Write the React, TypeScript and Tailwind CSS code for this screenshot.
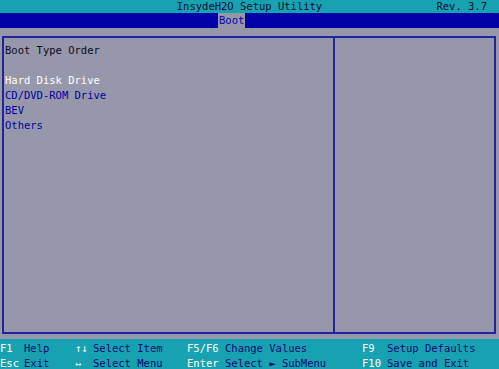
const FONT = "font-['DejaVu_Sans_Mono','Liberation_Mono',monospace]";

const FOOTER: { key: string; label: string; x: string }[][] = [
  [
    { key: "F1", label: "Help", x: "w-[75px]" },
    { key: "↑↓", label: "Select Item", x: "w-[112px]" },
    { key: "F5/F6", label: "Change Values", x: "w-[175px]" },
    { key: "F9", label: "Setup Defaults", x: "" },
  ],
  [
    { key: "Esc", label: "Exit", x: "w-[75px]" },
    { key: "↔", label: "Select Menu", x: "w-[112px]" },
    { key: "Enter", label: "Select ► SubMenu", x: "w-[175px]" },
    { key: "F10", label: "Save and Exit", x: "" },
  ],
];

const KEY_W: Record<string, string> = {
  F1: "w-[24px]",
  Esc: "w-[24px]",
  "↑↓": "w-[18px]",
  "↔": "w-[18px]",
  "F5/F6": "w-[38px]",
  Enter: "w-[38px]",
  F9: "w-[25px]",
  F10: "w-[25px]",
};

export default function App() {
  return (
    <div
      className={`flex h-[369px] w-[499px] flex-col overflow-hidden bg-[#9797ab] text-[10.5px] ${FONT}`}
    >
      <header className="relative flex h-[13px] items-center justify-end bg-[#17a2b2] pr-[12px] leading-[13px] text-[#0c0c30]">
        <span className="absolute left-0 right-0 text-center">InsydeH2O Setup Utility</span>
        <span className="relative">Rev. 3.7</span>
      </header>

      <nav className="flex h-[15px] items-stretch bg-[#0202a6] pl-[218px] leading-[15px]">
        <span className="bg-[#9797ab] px-[1px] text-[#0000a8]">Boot</span>
      </nav>

      <main className="flex flex-1 pb-[5px] pl-[2px] pr-[3px] pt-[8px]">
        <div className="flex flex-1 border-2 border-[#23239e]">
          <section className="w-[331px] border-r-2 border-[#23239e] pl-[1px] pt-[5px] leading-[15px]">
            <p className="text-[#0a0a20]">Boot Type Order</p>
            <p>&nbsp;</p>
            <p className="text-white">Hard Disk Drive</p>
            <p className="text-[#0000a0]">CD/DVD-ROM Drive</p>
            <p className="text-[#0000a0]">BEV</p>
            <p className="text-[#0000a0]">Others</p>
          </section>
          <section className="flex-1" />
        </div>
      </main>

      <footer className="flex h-[30px] flex-col bg-[#17a2b2] pt-[2px] leading-[15px]">
        {FOOTER.map((row, i) => (
          <div key={i} className="flex">
            {row.map((item) => (
              <div key={item.key} className={`flex ${item.x}`}>
                <span className={`${KEY_W[item.key]} text-white`}>{item.key}</span>
                <span className="text-[#080870]">{item.label}</span>
              </div>
            ))}
          </div>
        ))}
      </footer>
    </div>
  );
}
